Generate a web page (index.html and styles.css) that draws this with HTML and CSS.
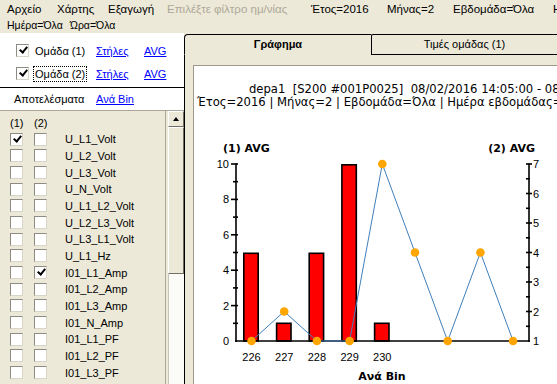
FILE: index.html
```html
<!DOCTYPE html>
<html lang="el">
<head>
<meta charset="utf-8">
<link rel="stylesheet" href="styles.css">
</head>
<body>
<div class="app">
  <div class="menubar">
    <div class="menu-row primary">
      <span class="mi">Αρχείο</span>
      <span class="mi">Χάρτης</span>
      <span class="mi">Εξαγωγή</span>
      <span class="mi disabled">Επιλέξτε φίλτρο ημ/νίας</span>
      <span class="mi">Έτος=2016</span>
      <span class="mi">Μήνας=2</span>
      <span class="mi">Εβδομάδα=Όλα</span>
      <span class="mi">Ημέρα</span>
    </div>
    <div class="menu-row secondary">
      <span class="mi">Ημέρα=Όλα</span>
      <span class="mi">Ώρα=Όλα</span>
    </div>
  </div>
  <div class="main">
    <aside class="side">
      <div class="groups">
        <div class="group-row">
          <span class="cb checked"></span>
          <span class="glabel">Ομάδα (1)</span>
          <a class="link cols">Στήλες</a>
          <a class="link">AVG</a>
        </div>
        <div class="group-row">
          <span class="cb checked"></span>
          <span class="glabel focused">Ομάδα (2)</span>
          <a class="link cols">Στήλες</a>
          <a class="link">AVG</a>
        </div>
      </div>
      <div class="results">
        <span class="res-label">Αποτελέσματα</span>
        <a class="link">Ανά Bin</a>
      </div>
      <div class="listbox">
        <div class="list">
          <div class="list-head"><span class="col">(1)</span><span class="col">(2)</span></div>
          <div class="row"><span class="cb checked"></span><span class="cb"></span><span class="name">U_L1_Volt</span></div>
          <div class="row"><span class="cb"></span><span class="cb"></span><span class="name">U_L2_Volt</span></div>
          <div class="row"><span class="cb"></span><span class="cb"></span><span class="name">U_L3_Volt</span></div>
          <div class="row"><span class="cb"></span><span class="cb"></span><span class="name">U_N_Volt</span></div>
          <div class="row"><span class="cb"></span><span class="cb"></span><span class="name">U_L1_L2_Volt</span></div>
          <div class="row"><span class="cb"></span><span class="cb"></span><span class="name">U_L2_L3_Volt</span></div>
          <div class="row"><span class="cb"></span><span class="cb"></span><span class="name">U_L3_L1_Volt</span></div>
          <div class="row"><span class="cb"></span><span class="cb"></span><span class="name">U_L1_Hz</span></div>
          <div class="row"><span class="cb"></span><span class="cb checked"></span><span class="name">I01_L1_Amp</span></div>
          <div class="row"><span class="cb"></span><span class="cb"></span><span class="name">I01_L2_Amp</span></div>
          <div class="row"><span class="cb"></span><span class="cb"></span><span class="name">I01_L3_Amp</span></div>
          <div class="row"><span class="cb"></span><span class="cb"></span><span class="name">I01_N_Amp</span></div>
          <div class="row"><span class="cb"></span><span class="cb"></span><span class="name">I01_L1_PF</span></div>
          <div class="row"><span class="cb"></span><span class="cb"></span><span class="name">I01_L2_PF</span></div>
          <div class="row"><span class="cb"></span><span class="cb"></span><span class="name">I01_L3_PF</span></div>
        </div>
        <div class="scrollbar">
          <div class="sb-btn"><span class="arrow-up"></span></div>
          <div class="sb-thumb"></div>
          <div class="sb-track"></div>
        </div>
      </div>
    </aside>
    <section class="tabs">
      <div class="tabbar">
        <div class="tab active">Γράφημα</div>
        <div class="tab">Τιμές ομάδας (1)</div>
      </div>
      <div class="tabpanel">
        <div class="chart">
          <div class="chart-title">depa1  [S200 #001P0025]  08/02/2016 14:05:00 - 08/02/2016</div>
          <div class="chart-sub">Έτος=2016 | Μήνας=2 | Εβδομάδα=Όλα | Ημέρα εβδομάδας=Όλα</div>
          <svg class="plot" width="363" height="275" viewBox="194 109 363 275" xmlns="http://www.w3.org/2000/svg">
            <g class="axis-title">
              <text x="223" y="152">(1) AVG</text>
              <text x="535" y="152" text-anchor="end">(2) AVG</text>
            </g>
            <g fill="#ff0000" stroke="#000" stroke-width="1.6">
              <rect x="243.8" y="253.3" width="14.4" height="87.7"/>
              <rect x="276.6" y="323.3" width="14.4" height="17.7"/>
              <rect x="309.2" y="253.3" width="14.4" height="87.7"/>
              <rect x="341.9" y="164.8" width="14.4" height="176.2"/>
              <rect x="374.6" y="323.3" width="14.4" height="17.7"/>
            </g>
            <g stroke="#000" stroke-width="1.6" fill="none">
              <line x1="236" y1="163.5" x2="236" y2="342"/>
              <line x1="235" y1="341" x2="530" y2="341"/>
              <line x1="529" y1="163.5" x2="529" y2="342"/>
              <line x1="231" y1="164" x2="238" y2="164"/>
              <line x1="231" y1="199.4" x2="238" y2="199.4"/>
              <line x1="231" y1="234.8" x2="238" y2="234.8"/>
              <line x1="231" y1="270.2" x2="238" y2="270.2"/>
              <line x1="231" y1="305.6" x2="238" y2="305.6"/>
              <line x1="233" y1="181.7" x2="238" y2="181.7"/>
              <line x1="233" y1="217.1" x2="238" y2="217.1"/>
              <line x1="233" y1="252.5" x2="238" y2="252.5"/>
              <line x1="233" y1="287.9" x2="238" y2="287.9"/>
              <line x1="233" y1="323.3" x2="238" y2="323.3"/>
              <line x1="526" y1="164" x2="532" y2="164"/>
              <line x1="526" y1="193.5" x2="532" y2="193.5"/>
              <line x1="526" y1="223" x2="532" y2="223"/>
              <line x1="526" y1="252.5" x2="532" y2="252.5"/>
              <line x1="526" y1="282" x2="532" y2="282"/>
              <line x1="526" y1="311.5" x2="532" y2="311.5"/>
              <line x1="526" y1="178.8" x2="530" y2="178.8"/>
              <line x1="526" y1="208.3" x2="530" y2="208.3"/>
              <line x1="526" y1="237.8" x2="530" y2="237.8"/>
              <line x1="526" y1="267.3" x2="530" y2="267.3"/>
              <line x1="526" y1="296.8" x2="530" y2="296.8"/>
              <line x1="526" y1="326.3" x2="530" y2="326.3"/>
            </g>
            <g class="tick" text-anchor="end">
              <text x="229" y="168">10</text>
              <text x="229" y="203.4">8</text>
              <text x="229" y="238.8">6</text>
              <text x="229" y="274.2">4</text>
              <text x="229" y="309.6">2</text>
              <text x="229" y="345">0</text>
            </g>
            <g class="tick" text-anchor="start">
              <text x="533" y="168">7</text>
              <text x="533" y="197.5">6</text>
              <text x="533" y="227">5</text>
              <text x="533" y="256.5">4</text>
              <text x="533" y="286">3</text>
              <text x="533" y="315.5">2</text>
              <text x="533" y="345">1</text>
            </g>
            <g class="tick" text-anchor="middle">
              <text x="251.5" y="361">226</text>
              <text x="284.2" y="361">227</text>
              <text x="316.9" y="361">228</text>
              <text x="349.6" y="361">229</text>
              <text x="382.3" y="361">230</text>
            </g>
            <text class="axis-title" x="382" y="380" text-anchor="middle">Ανά Bin</text>
            <polyline fill="none" stroke="#3f7fba" stroke-width="1" points="251.5,341 284.2,311.5 316.9,341 349.6,341 382.3,164 415,252.5 447.7,341 480.4,252.5 513.1,341"/>
            <g fill="#ffa500">
              <circle cx="251.5" cy="341" r="4.3"/>
              <circle cx="284.2" cy="311.5" r="4.3"/>
              <circle cx="316.9" cy="341" r="4.3"/>
              <circle cx="349.6" cy="341" r="4.3"/>
              <circle cx="382.3" cy="164" r="4.3"/>
              <circle cx="415" cy="252.5" r="4.3"/>
              <circle cx="447.7" cy="341" r="4.3"/>
              <circle cx="480.4" cy="252.5" r="4.3"/>
              <circle cx="513.1" cy="341" r="4.3"/>
            </g>
          </svg>
        </div>
      </div>
    </section>
  </div>
</div>
</body>
</html>
```

FILE: styles.css
```css
html, body {
  margin: 0;
  padding: 0;
  overflow: hidden;
}
body {
  width: 557px;
  height: 384px;
  background: #ece9d8;
  font-family: "Liberation Sans", "DejaVu Sans", sans-serif;
  font-size: 11px;
  color: #000;
}
.app {
  display: flex;
  flex-direction: column;
  height: 384px;
}
.menubar {
  height: 33px;
  flex: none;
  overflow: hidden;
}
.menu-row {
  display: grid;
  height: 16px;
  line-height: 16px;
  white-space: nowrap;
  padding-left: 7px;
}
.menu-row.primary {
  padding-top: 1px;
  grid-template-columns: 50px 51px 59px 144px 76px 66px 100px 60px;
}
.menu-row.secondary {
  grid-template-columns: 63px 80px;
}
.mi {
  font-size: 11.5px;
}
.menu-row.secondary .mi {
  font-size: 10.5px;
}
.mi.disabled {
  color: #aca899;
}
.main {
  flex: 1;
  display: flex;
  min-height: 0;
}
.side {
  width: 184px;
  flex: none;
  display: flex;
  flex-direction: column;
  background: #fff;
}
.groups {
  padding-top: 6px;
  padding-bottom: 2px;
  border-bottom: 1px solid #000;
}
.group-row {
  display: flex;
  align-items: center;
  height: 23px;
  padding-left: 16px;
}
.link {
  color: #0000ff;
  text-decoration: underline;
}
.glabel {
  box-sizing: border-box;
  width: 54px;
  margin-left: 4px;
  margin-right: 9px;
  padding: 1px 1px;
  color: #000;
  border: 1px dotted transparent;
  white-space: nowrap;
}
.glabel.focused {
  border-color: #000;
}
.cols {
  width: 48px;
}
.results {
  height: 22px;
  display: flex;
  align-items: center;
  padding-left: 14px;
}
.res-label {
  width: 82px;
}
.listbox {
  flex: 1;
  display: flex;
  background: #ece9d8;
  border-top: 1px solid #aca899;
  min-height: 0;
  overflow: hidden;
}
.list {
  width: 166px;
  border-right: 1px solid #aca899;
  padding-top: 4px;
  padding-left: 10px;
  box-sizing: border-box;
}
.list-head {
  display: flex;
  height: 16px;
  line-height: 16px;
}
.col {
  width: 24px;
}
.row {
  display: flex;
  align-items: center;
  height: 16.67px;
}
.cb {
  width: 11px;
  height: 11px;
  background: #fff;
  border: 1px solid;
  border-color: #8d8b83 #d8d5c8 #d8d5c8 #8d8b83;
  flex: none;
  position: relative;
}
.row .cb + .cb {
  margin-left: 11px;
}
.cb.checked::after {
  content: "";
  position: absolute;
  left: 4px;
  top: 0;
  width: 3px;
  height: 6px;
  border: solid #000;
  border-width: 0 2px 2px 0;
  transform: rotate(40deg);
}
.name {
  margin-left: 18px;
  white-space: nowrap;
}
.scrollbar {
  width: 16px;
  margin-left: 2px;
  display: flex;
  flex-direction: column;
  flex: none;
}
.sb-btn, .sb-thumb {
  box-sizing: border-box;
  background: #ece9d8;
  border: 1px solid;
  border-color: #fff #716f64 #716f64 #fff;
}
.sb-btn {
  height: 16px;
  display: flex;
  align-items: center;
  justify-content: center;
}
.arrow-up {
  width: 0;
  height: 0;
  border-left: 3.5px solid transparent;
  border-right: 3.5px solid transparent;
  border-bottom: 4px solid #000;
}
.sb-thumb {
  height: 147px;
}
.sb-track {
  flex: 1;
  background: #fbfbf8;
  border-left: 1px solid #c8c5b8;
}
.tabs {
  flex: 1;
  display: flex;
  flex-direction: column;
  min-width: 0;
  padding-top: 1px;
}
.tabbar {
  display: flex;
  height: 21px;
  flex: none;
}
.tab {
  box-sizing: border-box;
  width: 187px;
  flex: none;
  height: 21px;
  line-height: 19px;
  text-align: center;
  border-top: 1px solid #000;
  border-bottom: 1px solid #000;
  white-space: nowrap;
}
.tab.active {
  font-weight: bold;
  border-left: 1px solid #000;
  border-bottom-color: transparent;
  border-top-left-radius: 4px;
}
.tab + .tab {
  border-left: 1px solid #000;
  border-top-left-radius: 2px;
  flex: 1;
}
.tabpanel {
  flex: 1;
  border-left: 1px solid #000;
  padding: 10px 0 0 8px;
  min-height: 0;
}
.chart {
  height: 100%;
  background: #fff;
  border-top: 1px solid #9d9a8c;
  border-left: 1px solid #9d9a8c;
  overflow: hidden;
  font-family: "DejaVu Sans", sans-serif;
  font-size: 11.6px;
}
.chart-title, .chart-sub {
  white-space: pre;
  line-height: 13px;
  height: 13px;
  overflow: hidden;
}
.chart-title {
  padding-top: 17px;
  padding-left: 55px;
}
.chart-sub {
  padding-left: 3px;
}
.plot {
  display: block;
  font-family: "Liberation Sans", sans-serif;
}
.tick text, .tick {
  font-size: 11px;
  fill: #000;
}
.axis-title, .axis-title text {
  font-family: "DejaVu Sans", sans-serif;
  font-size: 11px;
  font-weight: bold;
  fill: #000;
}
```
